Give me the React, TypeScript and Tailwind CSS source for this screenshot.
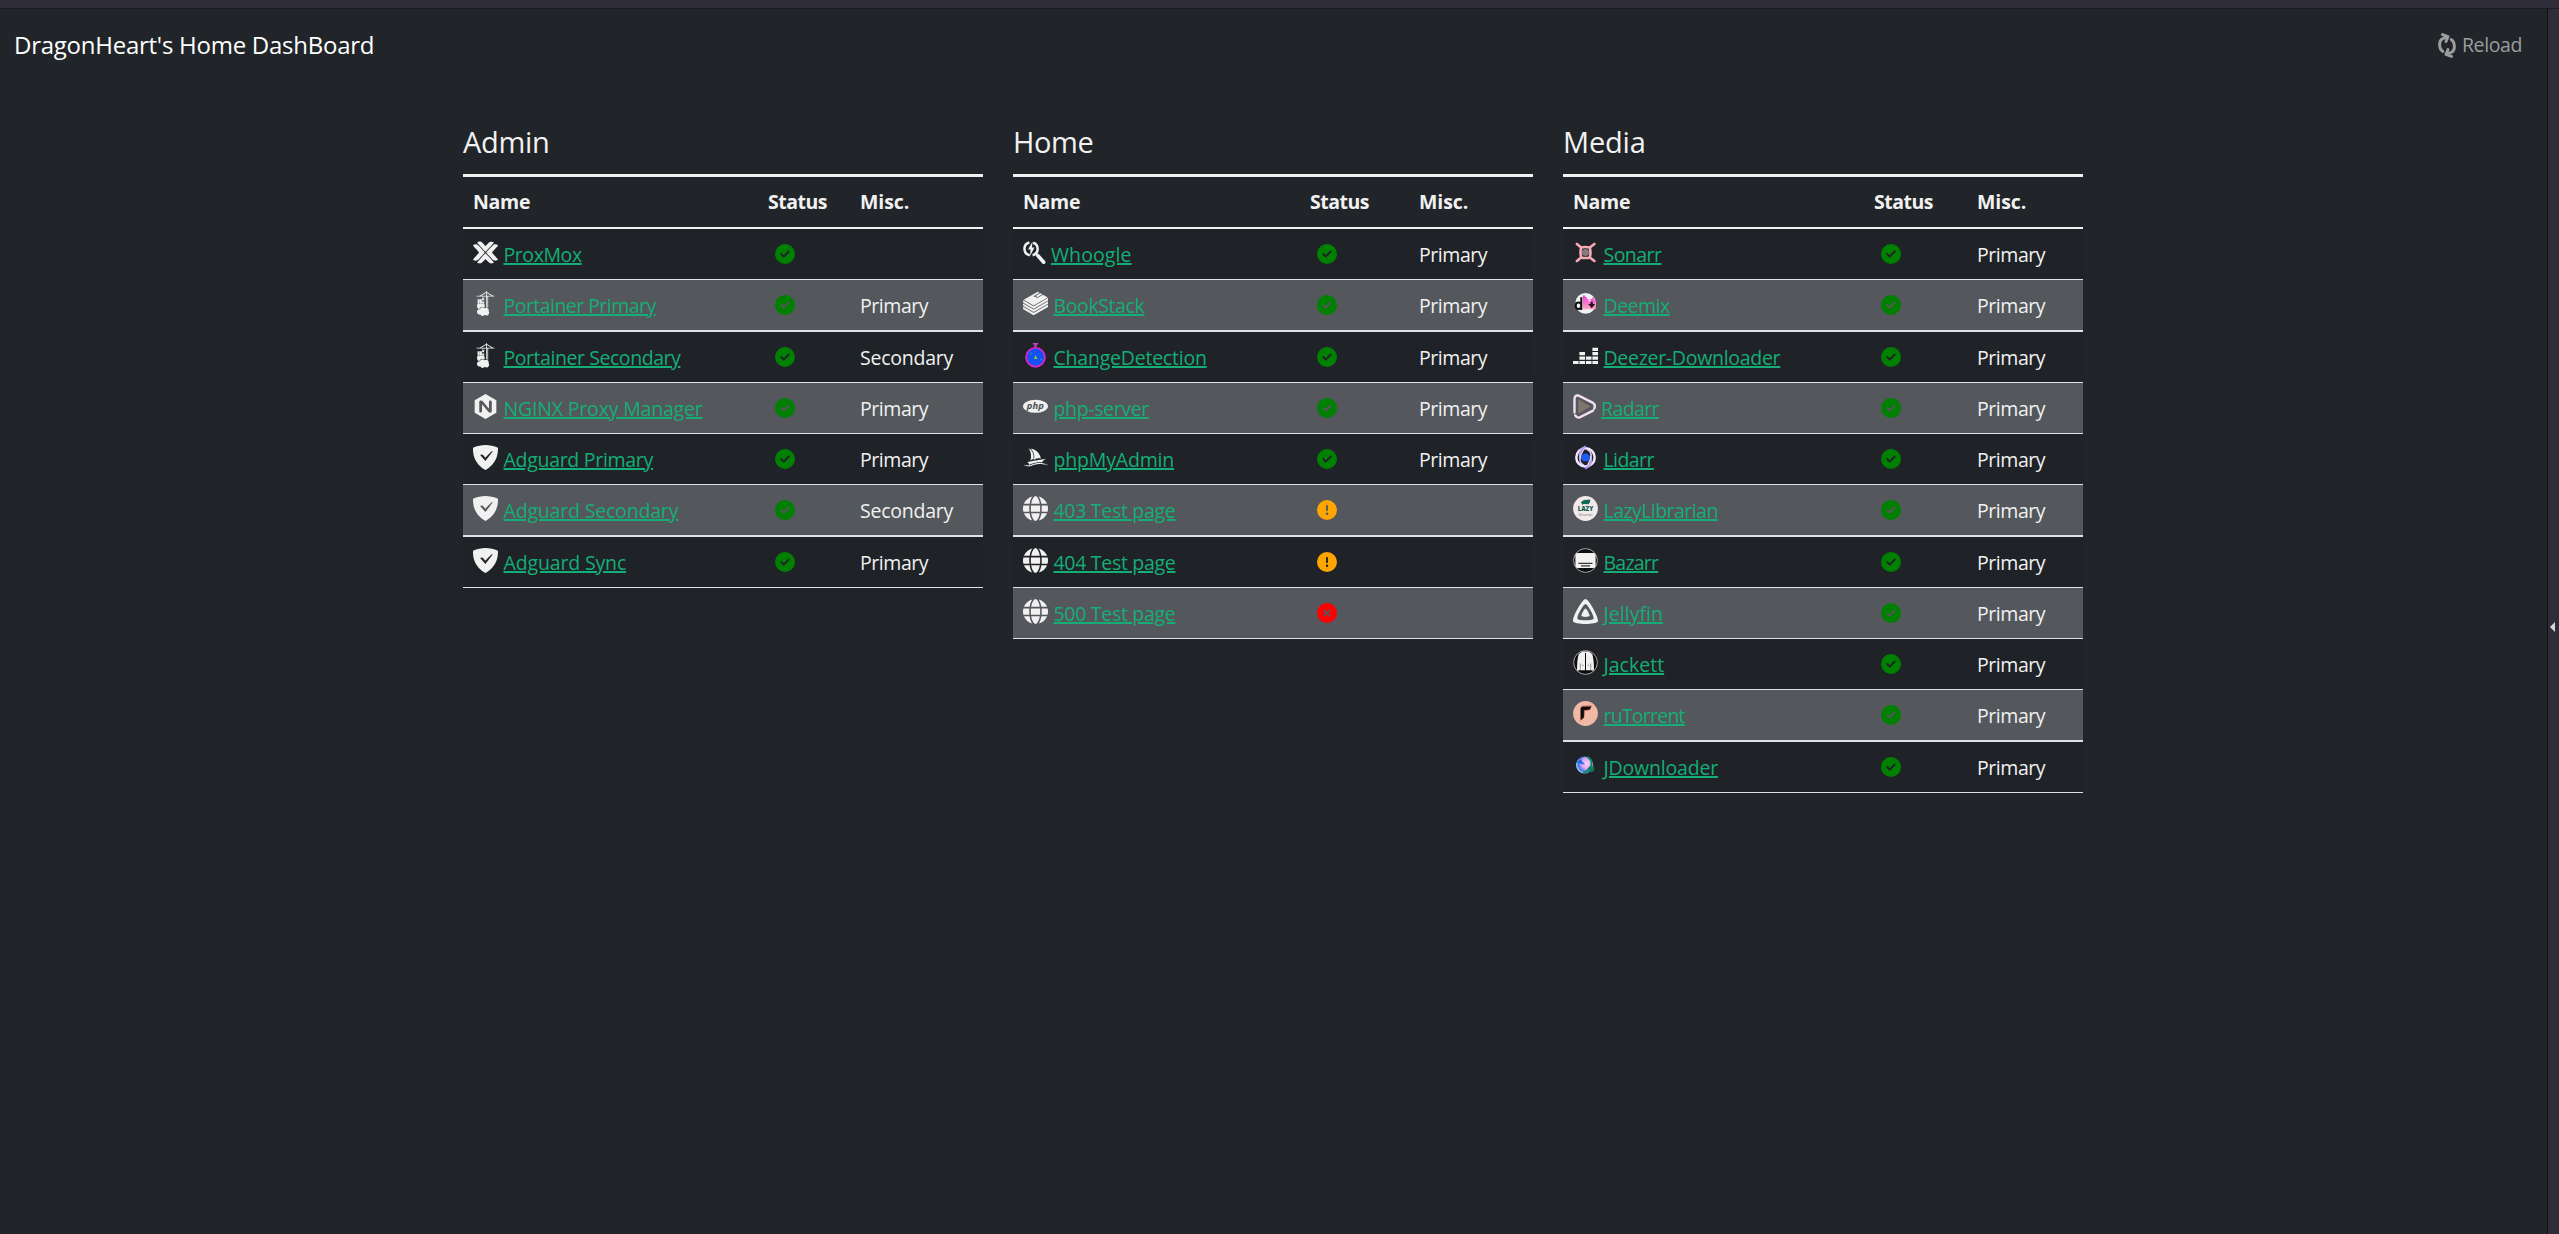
import type { ReactNode } from 'react';
import { FaCircleCheck, FaCircleExclamation, FaCircleXmark, FaGlobe } from 'react-icons/fa6';
import {
  SiAdguard,
  SiBookstack,
  SiJellyfin,
  SiNginx,
  SiPhpmyadmin,
  SiPortainer,
  SiProxmox,
} from 'react-icons/si';

type Status = 'ok' | 'warn' | 'down';

interface Service {
  name: string;
  icon: ReactNode;
  status: Status;
  misc?: 'Primary' | 'Secondary';
  tracking: string;
  narrow?: boolean;
}

interface Group {
  title: string;
  titleTracking: string;
  columns: string;
  services: Service[];
}

function Art({ children }: { children: ReactNode }) {
  return (
    <svg viewBox="0 0 25 25" className="size-[25px]">
      {children}
    </svg>
  );
}

const whoogle = (
  <Art>
    <g fill="none" stroke="#f1f1f1">
      <path d="M6.400 2.500A6.500 6.500 0 0 0 6.800 15.200M10.200 2.700A6.500 6.500 0 0 1 9.600 15.200" strokeWidth="2.500" />
      <path d="M15 15.800 20.700 22.200" strokeWidth="3.600" strokeLinecap="round" />
      <path d="M12 12.500 16 17" strokeWidth="2.200" />
    </g>
    <path d="M9.600 1.600 5 9.600h2.600L7 16l4.500-8.400H8.900Z" fill="#f1f1f1" />
  </Art>
);

const changeDetection = (
  <Art>
    <path d="M9.800 0h5.400v1.600h-1.600v3h-2.200v-3H9.800Z" fill="#cf3fc0" />
    <circle cx="12.500" cy="14.300" r="9.400" fill="#1550f2" stroke="#d625c9" strokeWidth="1.900" />
    <path d="M8 9.500v2.400M6.800 10.700h2.400M18.300 15.200v2.400M17.100 16.400h2.400" stroke="#2b8fd0" strokeWidth=".7" />
    <path d="m12.600 12 1.700 3.900H11Z" fill="#7be00a" />
  </Art>
);

const php = (
  <Art>
    <ellipse cx="12.500" cy="12.300" rx="12.500" ry="6.500" fill="#f1f1f1" />
    <text x="12.300" y="14.600" textAnchor="middle" fontFamily="Open Sans" fontStyle="italic" fontWeight="700" fontSize="9" textLength="17" lengthAdjust="spacingAndGlyphs" fill="#4c4f53">
      php
    </text>
  </Art>
);

const sonarr = (
  <Art>
    <path
      d="M3.900 4 8.200 7.600q4.300-1.300 8.600 0L21.400 4M3.900 21 8.200 17.400q4.300 1.300 8.600 0l4.600 3.600M8.200 7.600q-1.300 4.900 0 9.800M16.800 7.600q1.300 4.900 0 9.800"
      fill="none"
      stroke="#f5abb6"
      strokeWidth="2.600"
      strokeLinecap="round"
    />
    <circle cx="12.500" cy="12.500" r="3.600" fill="#857b7b" />
  </Art>
);

const deemix = (
  <Art>
    <defs>
      <linearGradient id="deemix-bars" x1="0" y1="0" x2="0" y2="1">
        <stop offset="0" stopColor="#f53bd8" />
        <stop offset="1" stopColor="#fba6c4" />
      </linearGradient>
    </defs>
    <circle cx="12.600" cy="12.400" r="10.400" fill="#f1f1f1" />
    <path d="M9.800 4.600h2.300v1.500h1.600v2h1.700v2.300h1.900V8h1.900V6.400h1.700v2h1.900V18.300H9.800Z" fill="url(#deemix-bars)" />
    <path d="M8.300 6.300V19M8.300 14.800a2.800 3.200 0 1 0-5.600 0 2.800 3.200 0 0 0 5.600 0Z" fill="none" stroke="#111" strokeWidth="2" />
    <path d="M17.600 10.800h2.200v2.300h2.400l-3.500 4.200-3.500-4.200h2.400Z" fill="#2b0f1c" />
  </Art>
);

const deezer = (
  <Art>
    <path
      d="M0 17.900h5.600v3.200H0ZM6.400 17.900H12v3.200H6.400ZM12.900 17.900h5.600v3.200h-5.600ZM19.400 17.900H25v3.200h-5.600ZM6.400 13.500H12v3.200H6.400ZM12.900 13.500h5.600v3.200h-5.600ZM19.400 13.500H25v3.200h-5.600ZM6.400 9.100H12v3.200H6.400ZM19.400 9.100H25v3.200h-5.600ZM19.400 4.700H25v3.200h-5.600Z"
      fill="#f1f1f1"
    />
  </Art>
);

const radarr = (
  <Art>
    <path
      d="M1.500 18.500V4.800Q1.700 1 5.200 1.500L19.500 8.600q3.500 2.400 1.800 5.800M20 16.600 6.300 23.600Q3.600 23.900 2.200 21.400"
      fill="none"
      stroke="#f3dff0"
      strokeWidth="2.400"
      strokeLinecap="round"
    />
    <path d="M5.300 5.300 17.700 12.500 5.300 19.800Z" fill="#80746f" />
  </Art>
);

const lidarr = (
  <Art>
    <path d="m12.500 0 1.800 4h-3.600ZM12.500 25l1.800-4h-3.600Z" fill="#7a45e8" />
    <circle cx="12.500" cy="12.400" r="9.200" fill="#25202f" stroke="#f1e9fb" strokeWidth="2.500" />
    <path d="M12.500 1.500Q5 5.500 7.500 14M12.500 23.200q7.500-4 5-12.500" fill="none" stroke="#b79cf0" strokeWidth="2.200" />
    <path d="M14 4.300Q20.500 7.500 16.800 15.500l-2.500 5.500M11 20.500Q4.700 17.500 8 9.500l2.600-5" fill="none" stroke="#ded2f6" strokeWidth="1.400" />
    <circle cx="12.500" cy="12.400" r="3.900" fill="#1c5ff8" />
  </Art>
);

const lazyLibrarian = (
  <Art>
    <circle cx="12.500" cy="12.500" r="12.400" fill="#f4e9ea" />
    <path d="m8 6 3-1.900 6.300-.5-.3 2.700-1.500 2-5-.3-1.300 1Z" fill="#0f6b58" />
    <text x="12.500" y="14.900" textAnchor="middle" fontFamily="Open Sans" fontWeight="800" fontSize="6" textLength="15.500" lengthAdjust="spacingAndGlyphs" fill="#0b5f4d">
      LAZY
    </text>
    <text x="12.500" y="19.600" textAnchor="middle" fontFamily="Open Sans" fontSize="3.600" textLength="14" fill="#5f7672">
      librarian
    </text>
  </Art>
);

const bazarr = (
  <Art>
    <circle cx="12.500" cy="12.500" r="11.900" fill="#0c0c0e" stroke="#c0b1b5" strokeWidth=".9" />
    <rect x="2.400" y="5" width="20.200" height="15" rx="2.200" fill="#f1f1f1" />
    <path d="M5.500 15.400h14M8 17.900h9" stroke="#3a3436" strokeWidth="1.100" />
  </Art>
);

const jackett = (
  <Art>
    <circle cx="12.500" cy="12.500" r="11.900" fill="#0c0c0e" stroke="#c0b1b5" strokeWidth=".9" />
    <path d="M9.500 1.600h6l3.700 2.400Q21 9 21 20.500h-2.600l-.7-2.500v2.200H13V3h-1v17.200H7.300V18l-.7 2.500H4Q4 9 5.800 4Z" fill="#f1f1f1" />
    <path d="M7.300 13.500v5M17.700 13.500v5M9 15.300h1.500M14.500 15.300H16" stroke="#6a6466" strokeWidth=".7" />
  </Art>
);

const ruTorrent = (
  <Art>
    <circle cx="12.500" cy="12.500" r="12.400" fill="#f0b9a6" />
    <path d="M7.500 7.300 9 5.600l9.500-.3-1.700 3.400-5.600.6-.3 7.700-3.400 2.400Z" fill="#0d0d0d" />
    <path d="M8 6.200 9.200 5l9.300-.2-.6 1M10.900 16.600l-3.400 2.600M16.500 8.900l-5.200.7v6" fill="none" stroke="#d94f44" strokeWidth=".7" />
  </Art>
);

const jDownloader = (
  <Art>
    <defs>
      <radialGradient id="jd-globe" cx=".62" cy=".42" r=".65">
        <stop offset="0" stopColor="#fbd3f6" />
        <stop offset=".45" stopColor="#dda6f2" />
        <stop offset=".75" stopColor="#3f78ee" />
        <stop offset="1" stopColor="#bfe9fb" />
      </radialGradient>
    </defs>
    <circle cx="11.600" cy="12" r="8.600" fill="url(#jd-globe)" />
    <path d="M4 9.500 7.500 6.500 12 11.800Z" fill="#1d62e6" />
    <path d="M14.300 3.900q5.800 3.300 3.700 9.300-2 5-7.500 6.600" fill="none" stroke="#0f8a5c" strokeWidth="1.900" />
    <path d="m17 13.200 4.600 1-.7 3.500-2.600 1.900-.6-1.700-3.400-2.200Z" fill="#0c7d50" />
  </Art>
);

const brand = 'size-[25px] text-[#f1f1f1]';
const globe = <FaGlobe className={brand} />;

const groups: Group[] = [
  {
    title: 'Admin',
    titleTracking: 'tracking-[-0.3px]',
    columns: 'grid-cols-[305px_92px_1fr]',
    services: [
      { name: 'ProxMox', icon: <SiProxmox className={brand} />, status: 'ok', tracking: 'tracking-[-0.42px]' },
      { name: 'Portainer Primary', icon: <SiPortainer className={brand} />, status: 'ok', misc: 'Primary', tracking: 'tracking-[-0.54px]' },
      { name: 'Portainer Secondary', icon: <SiPortainer className={brand} />, status: 'ok', misc: 'Secondary', tracking: 'tracking-[-0.44px]' },
      { name: 'NGINX Proxy Manager', icon: <SiNginx className={brand} />, status: 'ok', misc: 'Primary', tracking: 'tracking-[-0.18px]' },
      { name: 'Adguard Primary', icon: <SiAdguard className={brand} />, status: 'ok', misc: 'Primary', tracking: 'tracking-[-0.29px]' },
      { name: 'Adguard Secondary', icon: <SiAdguard className={brand} />, status: 'ok', misc: 'Secondary', tracking: 'tracking-[-0.18px]' },
      { name: 'Adguard Sync', icon: <SiAdguard className={brand} />, status: 'ok', misc: 'Primary', tracking: 'tracking-[-0.15px]' },
    ],
  },
  {
    title: 'Home',
    titleTracking: 'tracking-[-0.4px]',
    columns: 'grid-cols-[297px_109px_1fr]',
    services: [
      { name: 'Whoogle', icon: whoogle, status: 'ok', misc: 'Primary', tracking: 'tracking-[0.1px]', narrow: true },
      { name: 'BookStack', icon: <SiBookstack className={brand} />, status: 'ok', misc: 'Primary', tracking: 'tracking-[-0.39px]' },
      { name: 'ChangeDetection', icon: changeDetection, status: 'ok', misc: 'Primary', tracking: 'tracking-[-0.22px]' },
      { name: 'php-server', icon: php, status: 'ok', misc: 'Primary', tracking: 'tracking-[-0.36px]' },
      { name: 'phpMyAdmin', icon: <SiPhpmyadmin className={brand} />, status: 'ok', misc: 'Primary', tracking: 'tracking-[-0.18px]' },
      { name: '403 Test page', icon: globe, status: 'warn', tracking: 'tracking-[-0.3px]' },
      { name: '404 Test page', icon: globe, status: 'warn', tracking: 'tracking-[-0.3px]' },
      { name: '500 Test page', icon: globe, status: 'down', tracking: 'tracking-[-0.3px]' },
    ],
  },
  {
    title: 'Media',
    titleTracking: 'tracking-[-0.2px]',
    columns: 'grid-cols-[311px_103px_1fr]',
    services: [
      { name: 'Sonarr', icon: sonarr, status: 'ok', misc: 'Primary', tracking: 'tracking-[-0.53px]' },
      { name: 'Deemix', icon: deemix, status: 'ok', misc: 'Primary', tracking: 'tracking-[-0.52px]' },
      { name: 'Deezer-Downloader', icon: deezer, status: 'ok', misc: 'Primary', tracking: 'tracking-[-0.29px]' },
      { name: 'Radarr', icon: radarr, status: 'ok', misc: 'Primary', tracking: 'tracking-[-0.62px]', narrow: true },
      { name: 'Lidarr', icon: lidarr, status: 'ok', misc: 'Primary', tracking: 'tracking-[-0.58px]' },
      { name: 'LazyLibrarian', icon: lazyLibrarian, status: 'ok', misc: 'Primary', tracking: 'tracking-[-0.55px]' },
      { name: 'Bazarr', icon: bazarr, status: 'ok', misc: 'Primary', tracking: 'tracking-[-0.77px]' },
      { name: 'Jellyfin', icon: <SiJellyfin className={brand} />, status: 'ok', misc: 'Primary', tracking: 'tracking-[0.04px]' },
      { name: 'Jackett', icon: jackett, status: 'ok', misc: 'Primary', tracking: 'tracking-[0.02px]' },
      { name: 'ruTorrent', icon: ruTorrent, status: 'ok', misc: 'Primary', tracking: 'tracking-[-0.77px]' },
      { name: 'JDownloader', icon: jDownloader, status: 'ok', misc: 'Primary', tracking: 'tracking-[-0.19px]' },
    ],
  },
];

function StatusIcon({ status }: { status: Status }) {
  if (status === 'ok') return <FaCircleCheck className="size-5 text-[#008000]" />;
  if (status === 'warn') return <FaCircleExclamation className="size-5 text-[#ffa500]" />;
  return <FaCircleXmark className="size-5 text-[#ff0000]" />;
}

function Row({ service, index, columns }: { service: Service; index: number; columns: string }) {
  const shade = index % 2 ? 'bg-[#54575b]' : 'bg-[#1f2226]';
  const rule = index % 4 === 1 ? 'border-b-2' : 'border-b';
  return (
    <div className={`grid ${columns} ${shade} ${rule} box-content h-[50px] border-[#dee2e6]`}>
      <div className={`flex items-start pt-[11px] pl-2.5 ${service.narrow ? 'gap-[3px]' : 'gap-[5.5px]'}`}>
        <span className="shrink-0">{service.icon}</span>
        <a
          href="#"
          className={`mt-0.5 leading-[26px] whitespace-nowrap text-[#14ae76] underline decoration-2 underline-offset-1 ${service.tracking}`}
        >
          {service.name}
        </a>
      </div>
      <div className="pt-[15px] pl-[7px]">
        <StatusIcon status={service.status} />
      </div>
      <div className={`pt-[13px] leading-[26px] ${service.misc === 'Secondary' ? 'tracking-[-0.24px]' : 'tracking-[-0.44px]'}`}>
        {service.misc}
      </div>
    </div>
  );
}

function GroupTable({ group }: { group: Group }) {
  return (
    <section className="w-[520px]">
      <h2 className={`flex h-[62px] items-center pb-0.5 text-[29px] ${group.titleTracking}`}>{group.title}</h2>
      <div className={`grid ${group.columns} box-content h-[50px] border-t-[3px] border-b-2 border-[#f1f1f1] font-bold`}>
        <span className="pt-3 pl-2.5 leading-[26px] tracking-[-0.3px]">Name</span>
        <span className="pt-3 leading-[26px] tracking-[-0.5px]">Status</span>
        <span className="pt-3 leading-[26px] tracking-[-0.1px]">Misc.</span>
      </div>
      {group.services.map((s, i) => (
        <Row key={s.name} service={s} index={i} columns={group.columns} />
      ))}
    </section>
  );
}

function ReloadIcon() {
  return (
    <svg viewBox="0 0 18 25" className="h-[25px] w-[18px]" fill="none" stroke="currentColor" strokeWidth="2.9" strokeLinecap="round" strokeLinejoin="round">
      <path d="M4.800 18.500C.8 16 .6 8.500 4 6L9 4M4.500 1.600 10 3.700 8 8.500" />
      <path d="M13.200 6.500c4 2.500 4.200 10 .8 12.500L9 21M13.500 23.400 8 21.300l2-4.800" />
    </svg>
  );
}

export default function App() {
  return (
    <div className="flex h-[1234px] flex-col bg-[#212529] font-['Open_Sans',sans-serif] text-[19.5px] text-[#f1f1f1]">
      <div className="h-[9px] shrink-0 border-b border-[#1c1b22] bg-[#2f2e38]" />
      <div className="flex flex-1">
        <div className="flex-1">
          <header className="flex h-[72px] items-center justify-between pr-[25px] pl-[14px]">
            <h1 className="text-2xl tracking-[-0.25px] text-white">DragonHeart's Home DashBoard</h1>
            <button type="button" className="flex items-center gap-1.5 text-[#9b9d9f]">
              <ReloadIcon />
              <span className="tracking-[-0.4px]">Reload</span>
            </button>
          </header>
          <main className="flex gap-[30px] pt-[31px] pl-[463px]">
            {groups.map((g) => (
              <GroupTable key={g.title} group={g} />
            ))}
          </main>
        </div>
        <aside className="flex w-3 flex-col border-l border-[#101014] bg-[#2f2e38] pt-[613px] pl-[2px]">
          <svg viewBox="0 0 5 10" className="h-[10px] w-[5px]" fill="#d6d6dc">
            <path d="M5 0v10L0 5Z" />
          </svg>
        </aside>
      </div>
    </div>
  );
}
